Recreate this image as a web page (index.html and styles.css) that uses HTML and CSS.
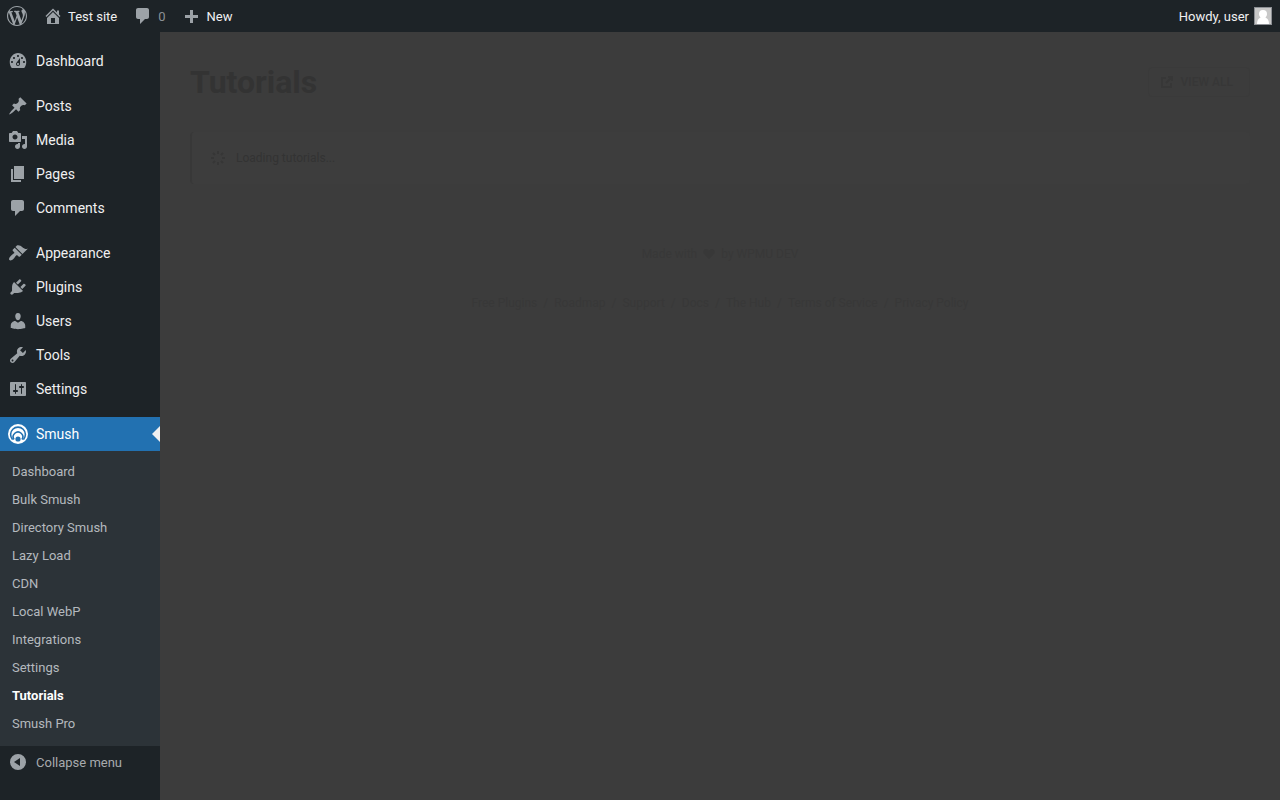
FILE: index.html
```html
<!DOCTYPE html>
<html lang="en">
<head>
  <meta charset="UTF-8" />
  <meta name="viewport" content="width=device-width, initial-scale=1.0"/>
  <title>Tutorials - Test site</title>
  <link rel="stylesheet" href="styles.css">
</head>
<body>

  <header class="admin-bar">
    <a class="bar-item" href="#" aria-label="WordPress">
      <svg class="icon" viewBox="0 0 20 20"><path d="M20 10c0-5.51-4.49-10-10-10C4.48 0 0 4.49 0 10c0 5.52 4.48 10 10 10 5.51 0 10-4.48 10-10zM7.78 15.37L4.37 6.22c.55-.02 1.17-.08 1.17-.08.5-.06.44-1.13-.06-1.11 0 0-1.45.11-2.37.11-.18 0-.37 0-.58-.01C4.12 2.69 6.87 1.11 10 1.11c2.33 0 4.45.87 6.05 2.34-.68-.11-1.65.39-1.65 1.58 0 .74.45 1.36.9 2.1.35.61.55 1.36.55 2.46 0 1.49-1.4 5-1.4 5l-3.03-8.37c.54-.02.82-.17.82-.17.5-.05.44-1.25-.06-1.22 0 0-1.44.12-2.38.12-.87 0-2.33-.12-2.33-.12-.5-.03-.56 1.2-.06 1.22l.92.08 1.26 3.41zM17.41 10c.24-.64.74-1.87.43-4.25.7 1.29 1.05 2.71 1.05 4.25 0 3.29-1.73 6.24-4.4 7.78.97-2.59 1.94-5.2 2.92-7.78zM6.1 18.09C3.12 16.65 1.11 13.53 1.11 10c0-1.3.23-2.48.72-3.59C3.25 10.3 4.67 14.2 6.1 18.09zm4.03-6.63l2.58 6.98c-.86.29-1.76.45-2.71.45-.79 0-1.57-.11-2.29-.33.81-2.38 1.62-4.74 2.42-7.1z"/></svg>
    </a>
    <a class="bar-item" href="#">
      <svg class="icon" viewBox="0 0 20 20"><path d="M16 8.5l1.53 1.53-1.06 1.06L10 4.6l-6.47 6.49-1.06-1.06L10 2.5l4 4v-2h2v4zm-6-2.46l6 5.99V18H4v-5.97zM12 17v-5H8v5h4z"/></svg>
      Test site
    </a>
    <a class="bar-item" href="#">
      <svg class="icon" viewBox="0 0 20 20"><path d="M5 2h9c1.1 0 2 .9 2 2v7c0 1.1-.9 2-2 2h-2l-5 5v-5H5c-1.1 0-2-.9-2-2V4c0-1.1.9-2 2-2z"/></svg>
      <span class="count">0</span>
    </a>
    <a class="bar-item" href="#">
      <svg class="icon" viewBox="0 0 20 20"><path d="M8 4h3v5h5v3h-5v5H8v-5H3V9h5z"/></svg>
      New
    </a>
    <a class="bar-item account" href="#">
      Howdy, user
      <svg class="avatar" viewBox="0 0 18 18"><path fill="#8c8f94" d="M0 0h18v18H0z"/><path fill="#c8c8c8" d="M1 1h16v16H1z"/><path fill="#fff" d="M9 3a4 4 0 0 1 4 4c0 1.5-.7 2.700-1.600 3.400C13.800 11.200 15 13.500 15 17H3c0-3.500 1.200-5.800 3.600-6.600C5.700 9.700 5 8.500 5 7a4 4 0 0 1 4-4z"/></svg>
    </a>
  </header>

  <div class="wrap">
    <nav class="admin-menu">
      <ul class="menu-group">
        <li><a href="#"><svg class="icon" viewBox="0 0 20 20"><path d="M3.760 17h12.480c1.340-1.630 2.010-3.820 2.010-6 0-4.970-3.690-9-8.250-9s-8.250 4.030-8.250 9c0 2.180.67 4.370 2.010 6zM10 4c.55 0 1 .45 1 1s-.45 1-1 1-1-.45-1-1 .45-1 1-1zM6 6c.55 0 1 .45 1 1s-.45 1-1 1-1-.45-1-1 .45-1 1-1zm8 0c.55 0 1 .45 1 1s-.45 1-1 1-1-.45-1-1 .45-1 1-1zm-5.370 5.550L12 7v6c0 1.100-.9 2-2 2s-2-.9-2-2c0-.57.24-1.080.63-1.450zM4 10c.55 0 1 .45 1 1s-.45 1-1 1-1-.45-1-1 .45-1 1-1zm12 0c.55 0 1 .45 1 1s-.45 1-1 1-1-.45-1-1 .45-1 1-1zm-5 3c0-.55-.45-1-1-1s-1 .45-1 1 .45 1 1 1 1-.45 1-1z"/></svg>Dashboard</a></li>
      </ul>
      <ul class="menu-group">
        <li><a href="#"><svg class="icon" viewBox="0 0 20 20"><path d="M10.440 3.020l1.820-1.820 6.360 6.350-1.830 1.820c-1.050-.68-2.480-.57-3.410.36l-.75.75c-.92.93-1.040 2.350-.35 3.410l-1.830 1.820-2.410-2.410-2.800 2.790c-.42.42-3.380 2.710-3.800 2.290s1.860-3.390 2.280-3.810l2.790-2.790L4.100 9.360l1.830-1.820c1.050.69 2.480.57 3.400-.36l.75-.75c.93-.92 1.050-2.350.36-3.410z"/></svg>Posts</a></li>
        <li><a href="#"><svg class="icon" viewBox="0 0 20 20"><path d="M13 11V4c0-.55-.45-1-1-1h-1.670L9 1H5L3.670 3H2c-.55 0-1 .45-1 1v7c0 .55.45 1 1 1h10c.55 0 1-.45 1-1zM7 4.500c1.380 0 2.500 1.120 2.500 2.500S8.380 9.500 7 9.500 4.500 8.380 4.500 7 5.620 4.500 7 4.500zM14 6h5v10.500c0 1.380-1.120 2.500-2.500 2.500S14 17.880 14 16.500s1.120-2.500 2.500-2.500c.17 0 .34.02.5.05V9h-3V6zm-4 8.050V13h2v3.500c0 1.380-1.120 2.500-2.500 2.500S7 17.880 7 16.500 8.120 14 9.500 14c.17 0 .34.02.5.05z"/></svg>Media</a></li>
        <li><a href="#"><svg class="icon" viewBox="0 0 20 20"><path d="M6 15V2h10v13H6zm-1 1h8v2H3V5h2v11z"/></svg>Pages</a></li>
        <li><a href="#"><svg class="icon" viewBox="0 0 20 20"><path d="M5 2h9c1.100 0 2 .9 2 2v7c0 1.100-.9 2-2 2h-2l-5 5v-5H5c-1.100 0-2-.9-2-2V4c0-1.100.9-2 2-2z"/></svg>Comments</a></li>
      </ul>
      <ul class="menu-group">
        <li><a href="#"><svg class="icon" viewBox="0 0 20 20"><path d="M14.480 11.060L7.410 3.990l1.500-1.500c.5-.56 2.300-.47 3.510.32 1.210.8 1.430 1.280 2.910 2.100 1.180.64 2.450 1.260 4.450.85zm-.71.71L6.700 4.700 4.930 6.470c-.39.39-.39 1.020 0 1.410l1.060 1.060c.39.39.39 1.030 0 1.420-.6.6-1.430 1.110-2.210 1.690-.35.26-.7.53-1.010.84C1.430 14.230.4 16.080 1.400 17.070c.99 1 2.840-.03 4.180-1.360.31-.31.58-.66.85-1.020.57-.78 1.080-1.610 1.690-2.210.39-.39 1.020-.39 1.410 0l1.060 1.060c.39.39 1.020.39 1.410 0z"/></svg>Appearance</a></li>
        <li><a href="#"><svg class="icon" viewBox="0 0 20 20"><path d="M13.110 4.360L9.870 7.600 8 5.730l3.240-3.240c.35-.34 1.050-.2 1.560.32.52.51.66 1.210.31 1.550zm-8 1.770l.91-1.120 9.010 9.010-1.190.84c-.71.71-2.630 1.160-3.820 1.160H6.140L4.900 17.260c-.59.59-1.540.59-2.120 0-.59-.58-.59-1.530 0-2.120l1.240-1.240v-3.880c0-1.130.4-3.190 1.090-3.890zm7.260 3.970l3.240-3.240c.34-.35 1.040-.21 1.550.31.52.51.66 1.210.31 1.550l-3.240 3.250z"/></svg>Plugins</a></li>
        <li><a href="#"><svg class="icon" viewBox="0 0 20 20"><path d="M10 9.250c-2.270 0-2.730-3.440-2.730-3.440C7 4.020 7.820 2 9.970 2c2.160 0 2.980 2.020 2.710 3.810 0 0-.41 3.440-2.680 3.440zm0 2.570L12.720 10c2.390 0 4.520 2.330 4.520 4.530v2.490s-3.650 1.130-7.240 1.130c-3.650 0-7.240-1.130-7.240-1.130v-2.490c0-2.250 1.940-4.480 4.470-4.480z"/></svg>Users</a></li>
        <li><a href="#"><svg class="icon" viewBox="0 0 20 20"><path d="M16.680 9.770c-1.340 1.340-3.300 1.670-4.950.99l-5.410 6.520c-.99.99-2.590.99-3.580 0s-.99-2.590 0-3.570l6.520-5.420c-.68-1.650-.35-3.610.99-4.950 1.280-1.280 3.120-1.620 4.720-1.060l-2.890 2.890 2.820 2.820 2.860-2.870c.53 1.580.18 3.390-1.080 4.650zM3.810 16.210c.4.39 1.040.39 1.430 0 .4-.4.4-1.040 0-1.430-.39-.4-1.030-.4-1.430 0-.39.39-.39 1.030 0 1.430z"/></svg>Tools</a></li>
        <li><a href="#"><svg class="icon" viewBox="0 0 20 20"><path d="M18 16V4c0-.55-.45-1-1-1H3c-.55 0-1 .45-1 1v12c0 .55.45 1 1 1h14c.55 0 1-.45 1-1zM8 11h1c.55 0 1 .45 1 1s-.45 1-1 1H8v1.500c0 .28-.22.5-.5.5s-.5-.22-.5-.5V13H6c-.55 0-1-.45-1-1s.45-1 1-1h1V5.500c0-.28.22-.5.5-.5s.5.22.5.5V11zm5-2h-1c-.55 0-1-.45-1-1s.45-1 1-1h1V5.500c0-.28.22-.5.5-.5s.5.22.5.5V7h1c.55 0 1 .45 1 1s-.45 1-1 1h-1v5.500c0 .28-.22.5-.5.5s-.5-.22-.5-.5V9z"/></svg>Settings</a></li>
      </ul>
      <ul class="menu-group">
        <li>
          <a class="current" href="#"><svg class="icon" viewBox="0 0 20 20"><circle cx="10" cy="10" r="10"/><g fill="none" stroke="#2271b1" stroke-width="1.600"><path d="M4.600 15.600A7.400 7.400 0 1 1 15.400 15.600"/><path d="M6 15.500A4.800 4.800 0 1 1 14 15.500"/></g><circle cx="10" cy="15" r="2.600" fill="#2271b1"/></svg>Smush</a>
          <ul class="submenu">
            <li><a href="#">Dashboard</a></li>
            <li><a href="#">Bulk Smush</a></li>
            <li><a href="#">Directory Smush</a></li>
            <li><a href="#">Lazy Load</a></li>
            <li><a href="#">CDN</a></li>
            <li><a href="#">Local WebP</a></li>
            <li><a href="#">Integrations</a></li>
            <li><a href="#">Settings</a></li>
            <li><a class="active" href="#">Tutorials</a></li>
            <li><a href="#">Smush Pro</a></li>
          </ul>
        </li>
      </ul>
      <button class="collapse" type="button"><svg class="icon" viewBox="0 0 20 20"><path fill-rule="evenodd" d="M10 2a8 8 0 1 0 0 16 8 8 0 0 0 0-16zm2 4v8l-6-4z"/></svg>Collapse menu</button>
    </nav>

    <main class="content">
      <div class="page-header">
        <h1>Tutorials</h1>
        <a class="view-all" href="#">
          <svg viewBox="0 0 12 12"><path d="M5 2H1v9h9V7M7 1h4v4M11 1L5 7"/></svg>
          VIEW ALL
        </a>
      </div>

      <div class="notice">
        <svg viewBox="0 0 16 16"><path d="M8 1v3M8 12v3M1 8h3M12 8h3M3 3l2 2M11 11l2 2M3 13l2-2M11 5l2-2"/></svg>
        <p>Loading tutorials...</p>
      </div>

      <footer class="footer">
        <p>
          Made with
          <svg viewBox="0 0 12 12"><path d="M6 11L1 6C-.5 4 .7 1 3 1c1.300 0 2.300.7 3 2 .7-1.300 1.700-2 3-2 2.300 0 3.500 3 2 5z"/></svg>
          by WPMU DEV
        </p>
        <ul class="footer-nav">
          <li><a href="#">Free Plugins</a></li>
          <li><a href="#">Roadmap</a></li>
          <li><a href="#">Support</a></li>
          <li><a href="#">Docs</a></li>
          <li><a href="#">The Hub</a></li>
          <li><a href="#">Terms of Service</a></li>
          <li><a href="#">Privacy Policy</a></li>
        </ul>
      </footer>
    </main>
  </div>

</body>
</html>
```
FILE: styles.css
```css
* {
  box-sizing: border-box;
}

body {
  margin: 0;
  min-height: 100vh;
  display: flex;
  flex-direction: column;
  background: #3c3c3c;
  color: #f0f0f1;
  font-family: Roboto, sans-serif;
  font-size: 13px;
}

a {
  color: inherit;
  text-decoration: none;
}

ul {
  list-style: none;
  margin: 0;
  padding: 0;
}

.icon {
  width: 20px;
  height: 20px;
  flex: none;
  fill: #9ca2a7;
}

/* Top bar */
.admin-bar {
  display: flex;
  height: 32px;
  background: #1d2327;
}

.bar-item {
  display: flex;
  align-items: center;
  gap: 5px;
  padding: 0 8px;
}

.bar-item:first-child {
  padding-left: 7px;
}

.count {
  color: #8c9196;
}

.account {
  margin-left: auto;
}

.avatar {
  width: 18px;
  height: 18px;
}

/* Sidebar */
.wrap {
  display: flex;
  flex: 1;
}

.admin-menu {
  width: 160px;
  flex: none;
  padding-top: 12px;
  background: #1d2327;
  font-size: 14px;
}

.menu-group + .menu-group {
  margin-top: 11px;
}

.menu-group > li > a,
.collapse {
  display: flex;
  align-items: center;
  gap: 8px;
  height: 34px;
  padding: 0 8px;
}

.menu-group > li > .current {
  position: relative;
  background: #2271b1;
  color: #fff;
}

.current .icon {
  fill: #fff;
}

.current::after {
  content: "";
  position: absolute;
  right: 0;
  top: 9px;
  border: 8px solid transparent;
  border-left: 0;
  border-right-color: #f0f0f1;
}

.submenu {
  padding: 7px 0 8px;
  background: #2c3338;
  color: #b4b9be;
  font-size: 13px;
}

.submenu a {
  display: block;
  padding: 0 12px;
  line-height: 28px;
}

.submenu .active {
  color: #fff;
  font-weight: bold;
}

.collapse {
  width: 100%;
  height: 32px;
  border: 0;
  background: none;
  color: #a7aaad;
  font: inherit;
  font-size: 13px;
  cursor: pointer;
}

/* Page content */
.content {
  flex: 1;
  padding: 30px;
  color: #333;
}

.page-header {
  display: flex;
  align-items: center;
  justify-content: space-between;
  height: 40px;
  margin-bottom: 30px;
}

.page-header h1 {
  margin: 0;
  font-size: 32px;
}

.view-all {
  display: flex;
  align-items: center;
  gap: 8px;
  height: 30px;
  padding: 0 16px 0 12px;
  border: 1px solid #3a3a3a;
  border-radius: 4px;
  color: #373737;
  font-size: 12px;
  font-weight: 500;
}

.view-all svg {
  width: 12px;
  height: 12px;
  fill: none;
  stroke: #373737;
  stroke-width: 2;
}

.notice {
  display: flex;
  align-items: center;
  gap: 10px;
  height: 52px;
  padding: 0 18px;
  border-left: 2px solid #383838;
  border-radius: 4px;
  background: #3d3d3d;
}

.notice svg {
  width: 16px;
  height: 16px;
  fill: none;
  stroke: #363636;
  stroke-width: 2;
}

.notice p {
  margin: 0;
  font-size: 12px;
}

.footer {
  padding-top: 60px;
  color: #383838;
  font-size: 12px;
}

.footer p {
  display: flex;
  align-items: center;
  justify-content: center;
  gap: 6px;
  margin: 0 0 30px;
  line-height: 20px;
}

.footer p svg {
  width: 12px;
  height: 12px;
  fill: #383838;
}

.footer-nav {
  display: flex;
  justify-content: center;
  line-height: 18px;
}

.footer-nav li + li::before {
  content: "/";
  margin: 0 6px;
}
```
